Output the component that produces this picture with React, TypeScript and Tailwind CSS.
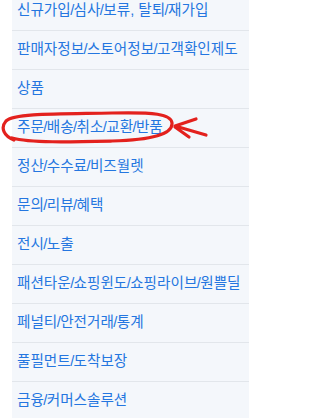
import { Fragment } from 'react';

const items = [
  '신규가입/심사/보류, 탈퇴/재가입',
  '판매자정보/스토어정보/고객확인제도',
  '상품',
  '주문/배송/취소/교환/반품',
  '정산/수수료/비즈월렛',
  '문의/리뷰/혜택',
  '전시/노출',
  '패션타운/쇼핑윈도/쇼핑라이브/원쁠딜',
  '페널티/안전거래/통계',
  '풀필먼트/도착보장',
  '금융/커머스솔루션',
];

// slashes sit tight against the hangul in the reference
function Label({ text }: { text: string }) {
  const parts = text.split('/');
  return (
    <>
      {parts.map((p, i) => (
        <Fragment key={i}>
          {i > 0 && <span className="mx-[-0.6px]">/</span>}
          {p}
        </Fragment>
      ))}
    </>
  );
}

export default function App() {
  return (
    <div className="relative h-[418px] w-[249px] overflow-hidden bg-white font-['Liberation_Sans','Noto_Sans_CJK_KR',sans-serif]">
      <ul className="ml-[12px] -mt-[8px] bg-[#f4f7fb]">
        {items.map((label) => (
          <li
            key={label}
            className="flex h-[39px] items-center whitespace-nowrap border-b border-[#e2e6eb] pl-[5px] text-[14.6px] text-[#2476e0]"
          >
            <span>
              <Label text={label} />
            </span>
          </li>
        ))}
      </ul>
      {/* hand-drawn red circle + arrow over the 주문 row */}
      <svg
        className="pointer-events-none absolute left-0 top-0"
        width="249"
        height="418"
        viewBox="0 0 249 418"
        fill="none"
        stroke="#e3211d"
        strokeWidth="3.2"
        strokeLinecap="round"
        strokeLinejoin="round"
      >
        <path d="M14 140 C 4 136, 0 128, 6 121 C 14 113, 60 114, 112 113 C 154 112, 171 114, 172 123 C 173 134, 152 140, 112 141 C 70 142, 30 143, 12 138" />
        <path d="M206 135 L 175 126 L 196 119 M 175 127 L 189 137" />
      </svg>
    </div>
  );
}
